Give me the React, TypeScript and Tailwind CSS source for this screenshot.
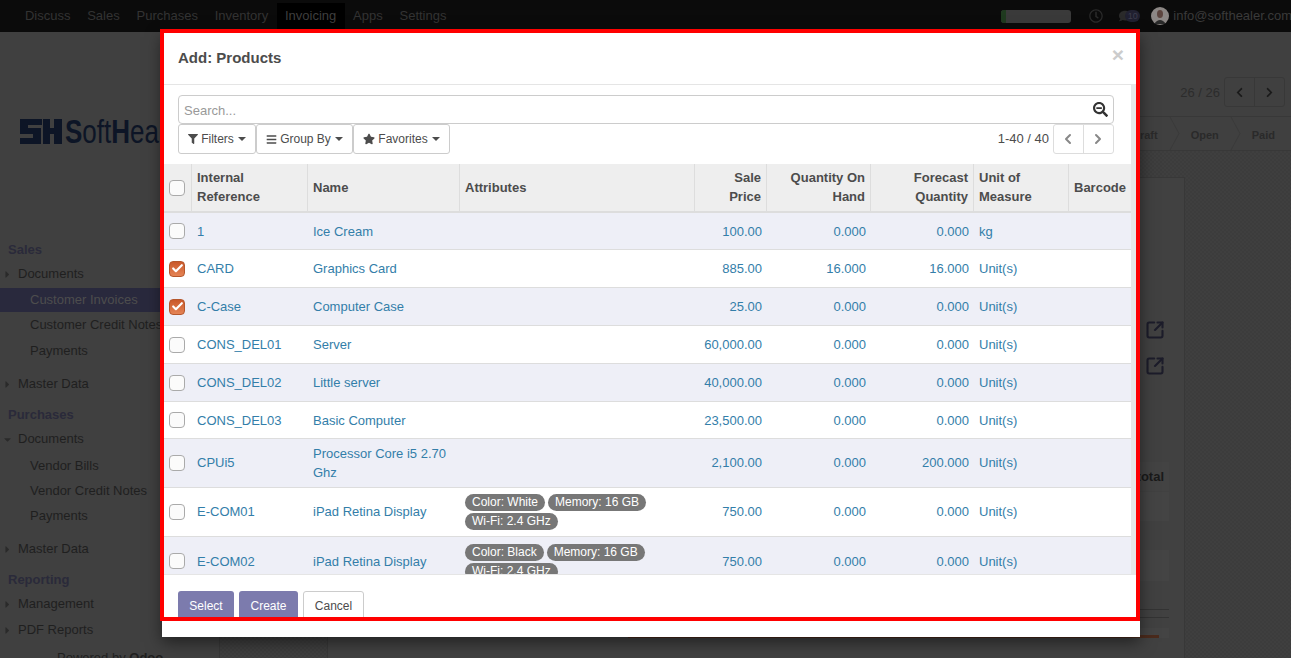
import { Check, ChevronLeft, ChevronRight, SquareArrowOutUpRight } from "lucide-react";
import { FaBars, FaCaretDown, FaCaretRight, FaChevronLeft, FaChevronRight, FaFilter, FaSearchMinus, FaStar, FaRegClock, FaComment } from "react-icons/fa";

const columns = [
  { label: "", width: "w-[30px]" },
  { label: "Internal Reference", width: "w-[116px]" },
  { label: "Name", width: "w-[152px]", nudge: true },
  { label: "Attributes", width: "w-[235px]", nudge: true },
  { label: "Sale Price", width: "w-[72px]", right: true },
  { label: "Quantity On Hand", width: "w-[104px]", right: true },
  { label: "Forecast Quantity", width: "w-[103px]", right: true },
  { label: "Unit of Measure", width: "w-[95px]" },
  { label: "Barcode", width: "w-[62px]", nudge: true },
];

// the original rows land on fractional pixels, so text sits 1px lower in most of them
const rows = [
  { h: "h-[37px]", nudge: true, ref: "1", name: "Ice Cream", price: "100.00", qty: "0.000", forecast: "0.000", uom: "kg" },
  { h: "h-[38px]", nudge: true, ref: "CARD", name: "Graphics Card", price: "885.00", qty: "16.000", forecast: "16.000", uom: "Unit(s)", checked: true },
  { h: "h-[38px]", nudge: true, ref: "C-Case", name: "Computer Case", price: "25.00", qty: "0.000", forecast: "0.000", uom: "Unit(s)", checked: true },
  { h: "h-[38px]", nudge: true, ref: "CONS_DEL01", name: "Server", price: "60,000.00", qty: "0.000", forecast: "0.000", uom: "Unit(s)" },
  { h: "h-[38px]", nudge: true, ref: "CONS_DEL02", name: "Little server", price: "40,000.00", qty: "0.000", forecast: "0.000", uom: "Unit(s)" },
  { h: "h-[37px]", nudge: true, ref: "CONS_DEL03", name: "Basic Computer", price: "23,500.00", qty: "0.000", forecast: "0.000", uom: "Unit(s)" },
  { h: "h-[49px]", nudgeName: true, ref: "CPUi5", name: "Processor Core i5 2.70 Ghz", price: "2,100.00", qty: "0.000", forecast: "200.000", uom: "Unit(s)" },
  { h: "h-[49px]", ref: "E-COM01", name: "iPad Retina Display", attrs: ["Color: White", "Memory: 16 GB", "Wi-Fi: 2.4 GHz"], price: "750.00", qty: "0.000", forecast: "0.000", uom: "Unit(s)" },
  { h: "h-[49px]", nudge: true, ref: "E-COM02", name: "iPad Retina Display", attrs: ["Color: Black", "Memory: 16 GB", "Wi-Fi: 2.4 GHz"], price: "750.00", qty: "0.000", forecast: "0.000", uom: "Unit(s)" },
];

function Box({ checked }: { checked?: boolean }) {
  if (checked) {
    return (
      <span className="flex h-4 w-4 items-center justify-center rounded-[4px] border border-[#b5572c] bg-[linear-gradient(#c9582a,#e58455)]">
        <Check size={13} strokeWidth={4} color="#fff" />
      </span>
    );
  }
  return <span className="block h-4 w-4 rounded-[4px] border border-[#aaaaaa] bg-[#fbfbfb]" />;
}

function SideHead({ children, className = "" }: { children: string; className?: string }) {
  return <div className={`h-[24px] pl-2 text-[13px] font-bold leading-[24px] text-[#2a2a3a] ${className}`}>{children}</div>;
}

function SideItem({ label, open, className = "" }: { label: string; open?: boolean; className?: string }) {
  return (
    <div className={`flex h-[24px] items-center text-[13px] text-[#1f1f1f] ${className}`}>
      <span className="flex w-[18px] justify-center pr-[4px] text-[#2a2a2a]">
        {open ? <FaCaretDown size={11} /> : <FaCaretRight size={11} />}
      </span>
      {label}
    </div>
  );
}

function SideSub({ label, active, className = "" }: { label: string; active?: boolean; className?: string }) {
  return (
    <div className={`whitespace-nowrap pl-[30px] text-[13px] ${active ? "h-[24px] bg-[#29293d] leading-[24px] text-[#4d4d4d]" : "h-[25px] leading-[25px] text-[#1f1f1f]"} ${className}`}>
      {label}
    </div>
  );
}

function ToolBtn({ icon, label, width }: { icon: React.ReactNode; label: string; width: string }) {
  return (
    <button className={`flex h-[30px] items-center justify-center gap-[3px] rounded-[3px] border border-[#cccccc] bg-white text-[12px] text-[#4c4c4c] ${width}`}>
      {icon}
      {label}
      <span className="ml-[1px] border-x-[4px] border-t-[4px] border-x-transparent border-t-[#4c4c4c]" />
    </button>
  );
}

function StageArrow() {
  return (
    <svg width="11" height="33" viewBox="0 0 11 33" className="mx-[11px] shrink-0">
      <path d="M1 0 L10 16.5 L1 33" fill="none" stroke="#3a3a3a" />
    </svg>
  );
}

export default function App() {
  return (
    <div className="relative h-[658px] w-[1291px] overflow-hidden bg-[#404040] font-['Liberation_Sans',sans-serif]">
      {/* app behind the dialog */}
      <div className="flex h-[32px] items-center bg-[#0b0b0b] pl-[16.5px] text-[13px] text-[#333333]">
        {["Discuss", "Sales", "Purchases", "Inventory"].map((m) => (
          <span key={m} className="px-[8.4px]">{m}</span>
        ))}
        <span className="mt-[3px] flex h-[29px] items-center bg-[#000000] px-[8.4px] pb-[3px] text-[#3f3f3f]">Invoicing</span>
        {["Apps", "Settings"].map((m) => (
          <span key={m} className="px-[8.4px]">{m}</span>
        ))}
        <div className="ml-auto -mr-[1px] flex items-center">
          <span className="flex h-[13px] w-[70px] overflow-hidden rounded-[3px] bg-[#3a3a3a]">
            <span className="w-[5px] bg-[#1f3a1f]" />
          </span>
          <FaRegClock size={14} className="ml-[18px] text-[#2a2a2a]" />
          <span className="ml-[16px] flex w-[21px] items-center text-[#2a2a2a]">
            <FaComment size={12} />
            <span className="-ml-[6px] w-[15px] rounded-full bg-[#202030] text-center text-[9px] leading-[12px] text-[#3d3d4d]">10</span>
          </span>
          <svg width="18" height="18" viewBox="0 0 18 18" className="ml-[11px]">
            <circle cx="9" cy="9" r="9" fill="#8c8785" />
            <ellipse cx="9" cy="7" rx="3" ry="4" fill="#5c453f" />
            <path d="M3 17 Q9 9 15 17 Z" fill="#2a2a2a" />
          </svg>
          <span className="ml-[4px] whitespace-nowrap text-[#3a3a3a]">info@softhealer.com</span>
        </div>
      </div>
      <div className="flex h-[626px]">
        <div className="w-[220px] shrink-0 border-r border-[#383838]">
          <div className="h-[206px] pl-[20px] pt-[86px]">
            <div className="flex h-[26px] items-center text-[#0d1526]">
              <svg width="42" height="25" viewBox="0 0 42 25" className="shrink-0">
                <path d="M0 0H22V6H8V9H21V25H0V19H13V15H0Z" fill="#0d1526" />
                <path d="M23 0H30V9H34V0H42V25H34V15H30V25H23Z" fill="#0d1526" />
              </svg>
              <span className="ml-[3px] origin-left scale-y-[1.3] whitespace-nowrap text-[26px] leading-[26px]">
                <b>S</b>oft<b>H</b>ealer
              </span>
            </div>
          </div>
          <SideHead>Sales</SideHead>
          <SideItem label="Documents" />
          <SideSub label="Customer Invoices" active className="mt-[2px]" />
          <SideSub label="Customer Credit Notes" />
          <SideSub label="Payments" className="mt-px" />
          <SideItem label="Master Data" className="mt-[9px]" />
          <SideHead className="mt-[7px]">Purchases</SideHead>
          <SideItem label="Documents" open />
          <SideSub label="Vendor Bills" className="mt-[2px]" />
          <SideSub label="Vendor Credit Notes" />
          <SideSub label="Payments" />
          <SideItem label="Master Data" className="mt-[9px]" />
          <SideHead className="mt-[7px]">Reporting</SideHead>
          <SideItem label="Management" />
          <SideItem label="PDF Reports" className="mt-[2px]" />
          <div className="mt-[4px] whitespace-nowrap pl-[57px] text-[13px] leading-[24px] text-[#1f1f1f]">
            Powered by <b>Odoo</b>
          </div>
        </div>
        <div className="flex min-w-0 flex-1 flex-col">
          <div className="flex h-[85px] shrink-0 items-center justify-end gap-[4px] border-b border-[#383838] pr-[6px] pt-[36px] text-[13px] text-[#2c2c2c]">
            <span className="pt-[2px]">26 / 26</span>
            <span className="flex h-[30px] w-[61px] rounded-[3px] border border-[#383838]">
              <span className="flex w-1/2 items-center justify-center border-r border-[#383838] text-[#1a1a1a]"><FaChevronLeft size={11} /></span>
              <span className="flex w-1/2 items-center justify-center text-[#1a1a1a]"><FaChevronRight size={11} /></span>
            </span>
          </div>
          <div className="flex h-[34px] shrink-0 items-center justify-end border-b border-[#383838] pr-[16px] text-[11px] font-bold text-[#2a2a2a]">
            <span className="pt-[3px]">Draft</span>
            <StageArrow />
            <span className="pt-[3px]">Open</span>
            <StageArrow />
            <span className="pt-[3px]">Paid</span>
          </div>
          <div className="flex-1 bg-[repeating-conic-gradient(#3c3c3c_0_25%,#3f3f3f_0_50%)] bg-[length:4px_4px] pl-[107px] pt-[26px]">
            <div className="h-[500px] w-[858px] border border-[#383838] bg-[#414141] pl-[300px] pr-[15px] pt-[142px]">
              <div className="flex h-[20px] justify-end pr-[4px] text-[#1c1c2a]"><SquareArrowOutUpRight size={20} strokeWidth={2.5} /></div>
              <div className="mt-[16px] flex h-[20px] justify-end pr-[4px] text-[#1c1c2a]"><SquareArrowOutUpRight size={20} strokeWidth={2.5} /></div>
              <div className="mt-[86px] h-[29px] bg-[#434343] pr-[5px] text-right text-[13px] font-bold leading-[29px] text-[#1a1a1a]">Subtotal</div>
              <div className="mt-[1px] h-[29px] bg-[#444444]" />
              <div className="mt-[29px] h-[31px] bg-[#444444]" />
              <div className="mt-[28px] h-px bg-[#333333]" />
              <div className="mt-[7px] h-px bg-[#333333]" />
              <div className="mt-[10px] flex h-[10px] items-end bg-[#444444] pr-[10px]">
                <div className="h-[3px] w-full bg-[#4a2a1c]" />
              </div>
            </div>
          </div>
        </div>
      </div>

      {/* Dialog */}
      <div className="absolute left-[162px] top-[32px] flex h-[605px] w-[978px] flex-col bg-white shadow-[0_5px_15px_rgba(0,0,0,0.5)]">
        <div className="flex h-[53px] shrink-0 items-center justify-between border-b border-[#e5e5e5] px-[16px]">
          <h4 className="text-[15px] font-bold text-[#4c4c4c]">Add: Products</h4>
          <span className="-mt-[7px] text-[21px] font-bold leading-none text-[#cccccc]">×</span>
        </div>
        <div className="flex h-[489px] shrink-0">
          <div className="w-[969px] shrink-0 overflow-hidden">
            <div className="pl-[16px] pr-[17px] pt-[10px]">
              <div className="flex h-[29px] items-center justify-between rounded-[4px] border border-[#cccccc] pl-[5px] pr-[5px] text-[13px] text-[#999999]">
                <span className="pt-[2px]">Search...</span>
                <FaSearchMinus size={15} className="text-[#333333]" />
              </div>
              <div className="flex h-[30px] items-center">
                <ToolBtn icon={<FaFilter size={10} />} label="Filters" width="w-[78px]" />
                <ToolBtn icon={<FaBars size={11} />} label="Group By" width="w-[97px]" />
                <ToolBtn icon={<FaStar size={12} />} label="Favorites" width="w-[97px]" />
                <span className="ml-auto mr-[4px] -mt-px text-[13px] text-[#4c4c4c]">1-40 / 40</span>
                <span className="flex h-[30px] w-[61px] rounded-[3px] border border-[#dddddd] text-[#888888]">
                  <span className="flex w-1/2 items-center justify-center border-r border-[#dddddd]"><ChevronLeft size={16} strokeWidth={3} /></span>
                  <span className="flex w-1/2 items-center justify-center"><ChevronRight size={16} strokeWidth={3} /></span>
                </span>
              </div>
            </div>
            <table className="mt-[10px] w-[969px] table-fixed border-separate border-spacing-0 text-[13px] leading-[18.57px]">
              <thead>
                <tr className="h-[49px] text-[#4c4c4c]">
                  {columns.map((c, i) => (
                    <th key={i} className={`${c.width} border-b-2 border-r border-[#dddddd] bg-[#eeeeee] px-[5px] font-bold last:border-r-0 ${i === 0 ? "pl-[7px]" : ""} ${c.nudge ? "pt-[2px]" : ""} ${c.right ? "text-right" : "text-left"}`}>
                      {i === 0 ? <Box /> : c.label}
                    </th>
                  ))}
                </tr>
              </thead>
              <tbody className="text-[#337ea9]">
                {rows.map((r, i) => {
                  const base = `border-b border-[#dddddd] px-[5px] ${i % 2 === 0 ? "bg-[#eeeff7]" : "bg-white"}`;
                  const cell = `${base} ${r.nudge ? "pt-[2px]" : ""}`;
                  return (
                    <tr key={r.ref} className={r.h}>
                      <td className={`${base} pl-[7px]`}><Box checked={r.checked} /></td>
                      <td className={cell}>{r.ref}</td>
                      <td className={`${cell} ${r.nudgeName ? "pt-[2px]" : ""}`}>{r.name}</td>
                      <td className={cell}>
                        {r.attrs && (
                          <div className="flex flex-wrap gap-x-[3px] gap-y-[2px]">
                            {r.attrs.map((a) => (
                              <span key={a} className="rounded-[9px] bg-[#777777] px-[7px] text-[12px] leading-[17px] text-white">{a}</span>
                            ))}
                          </div>
                        )}
                      </td>
                      <td className={`${cell} text-right`}>{r.price}</td>
                      <td className={`${cell} text-right`}>{r.qty}</td>
                      <td className={`${cell} text-right`}>{r.forecast}</td>
                      <td className={cell}>{r.uom}</td>
                      <td className={base} />
                    </tr>
                  );
                })}
              </tbody>
            </table>
          </div>
          <div className="w-[5px] shrink-0 bg-[#e6e6e6]" />
        </div>
        <div className="flex gap-[5px] border-t border-[#e5e5e5] pl-[16px] pt-[16px] text-[12px]">
          <button className="h-[30px] w-[56px] rounded-[3px] bg-[#7c7bad] text-white">Select</button>
          <button className="h-[30px] w-[59px] rounded-[3px] bg-[#7c7bad] text-white">Create</button>
          <button className="h-[30px] w-[61px] rounded-[3px] border border-[#cccccc] bg-white text-[#4c4c4c]">Cancel</button>
        </div>
      </div>

      {/* red annotation frame */}
      <div className="pointer-events-none absolute left-[160px] top-[29px] h-[592px] w-[980px] border-4 border-[#ff0000]" />
    </div>
  );
}
